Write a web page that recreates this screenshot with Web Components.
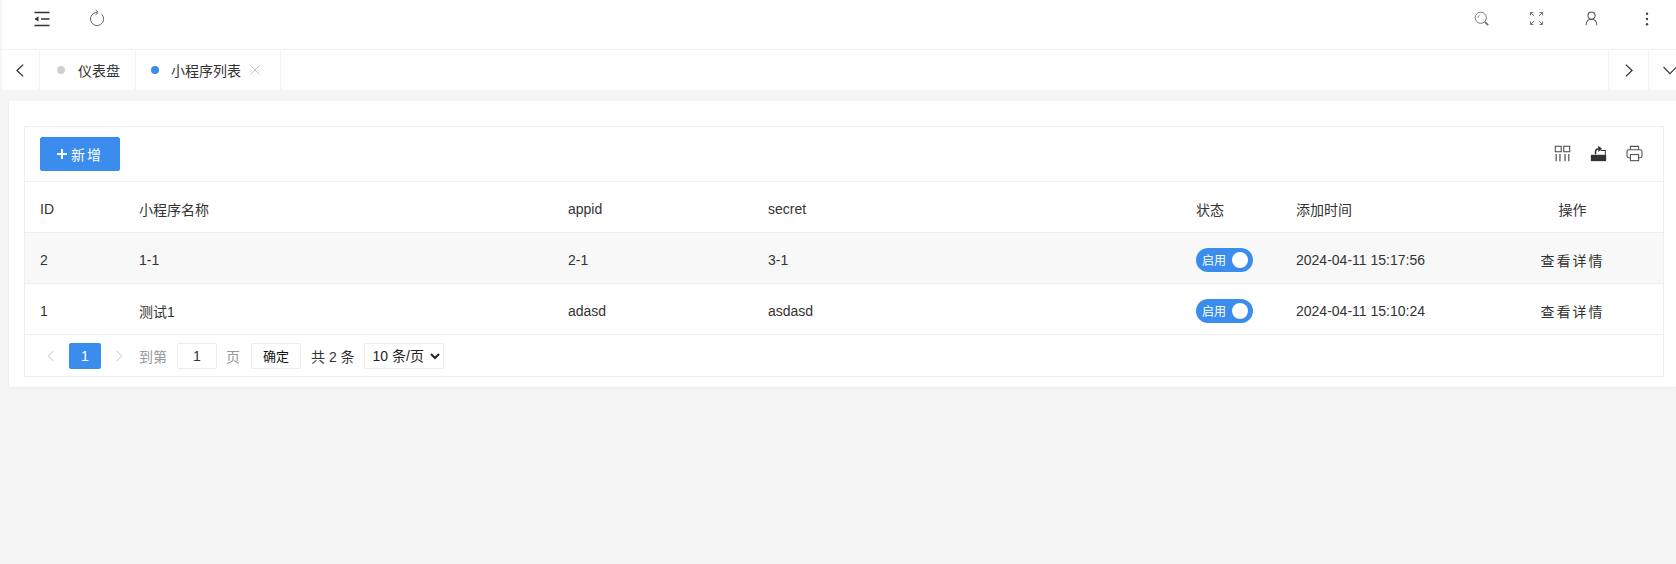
<!DOCTYPE html>
<html lang="zh">
<head>
<meta charset="utf-8">
<title>小程序列表</title>
<style>
  html, body { margin: 0; height: 100%; }
  body {
    background: #f5f5f5;
    font: 14px "Liberation Sans", "Noto Sans CJK SC", sans-serif;
    color: #333;
    overflow: hidden;
  }
</style>
</head>
<body>
<top-bar></top-bar>
<tab-bar>
  <tab-item first>仪表盘</tab-item>
  <tab-item active closable>小程序列表</tab-item>
</tab-bar>
<content-card>
  <data-table></data-table>
</content-card>

<script>
// all icons live here so the components stay short
const ICONS = {
    shrink: '<path d="M2.5 3.5h15M9 10h8.5M2.5 16.5h15" stroke="#333" stroke-width="1.5" fill="none"/><path d="M2.5 10l4-2.8v5.6z" fill="#333"/>',
    refresh: '<path d="M14.7 5.3a6.6 6.6 0 1 1-4.7-1.9" stroke="#666" stroke-width="1" fill="none"/><path d="M8.6 1l2.6 2.4-2.6 2.4" stroke="#666" stroke-width="1" fill="none"/>',
    search: '<circle cx="8.6" cy="8.6" r="6.2" stroke="#777" stroke-width="1.1" fill="none"/><path d="M5.6 8.6a3 3 0 0 1 1.8-2.8" stroke="#777" fill="none"/><path d="M13.2 13.4l3.6 3.4" stroke="#777" stroke-width="2.2" fill="none"/>',
    full: '<path d="M3 3l4 4M3 3v3.4M3 3h3.4M17 3l-4 4M17 3v3.4M17 3h-3.4M3 17l4-4M3 17v-3.4M3 17h3.4M17 17l-4-4M17 17v-3.4M17 17h-3.4" stroke="#666" stroke-width="1.1" fill="none"/>',
    user: '<circle cx="10" cy="6.6" r="4.2" stroke="#555" stroke-width="1.2" fill="none"/><path d="M3.6 18c.2-4.2 2.6-7 6.4-7s6.2 2.8 6.4 7" stroke="#555" stroke-width="1.2" fill="none"/>',
    more: '<circle cx="10" cy="3.4" r="1.5" fill="#444"/><circle cx="10" cy="10" r="1.5" fill="#444"/><circle cx="10" cy="16.6" r="1.5" fill="#444"/>',
    cols: '<path d="M1.5 1.5h7v6.5h-7zM11.5 1.5h7v6.5h-7z" stroke="#444" stroke-width="1.2" fill="none"/><path d="M2.6 10.5v8.5M7 10.5v8.5M13 10.5v8.5M17.4 10.5v8.5" stroke="#666" stroke-width="1.6" fill="none"/>',
    export: '<path d="M1 11.5h18V19H1z" fill="#333"/><path d="M12.5 6.5h5.5v5" stroke="#333" stroke-width="1.2" fill="none"/><path d="M6.5 11V8.2c0-2.4 1.4-3.7 3.6-3.7" stroke="#333" stroke-width="1.8" fill="none"/><path d="M9.6 .8l4.6 3.7-4.6 3.7z" fill="#333"/>',
    print: '<path d="M5.2 5.6V1.6h9.6v4" stroke="#555" stroke-width="1.3" fill="none"/><rect x="1.2" y="5.6" width="17.6" height="9.4" rx="2.2" stroke="#555" stroke-width="1.3" fill="none"/><rect x="5.2" y="11.2" width="9.6" height="7.2" fill="#fff" stroke="#555" stroke-width="1.3"/>'
};

function icon(name, size) {
    return `<svg width="${size}" height="${size}" viewBox="0 0 20 20" aria-hidden="true">${ICONS[name]}</svg>`;
}

class TopBar extends HTMLElement {
    constructor() {
        super();
        this.attachShadow({ mode: 'open' }).innerHTML = `
            <style>
                :host {
                    display: flex;
                    align-items: flex-start;
                    justify-content: space-between;
                    height: 49px;
                    background: #fff;
                    border-bottom: 1px solid #f2f2f2;
                    box-shadow: inset 3px 0 3px -2px rgba(0,0,0,.07);
                }
                .group { display: flex; height: 37px; align-items: center; }
                .left { padding-left: 14px; }
                .right { padding-right: 2px; }
                .cell { width: 55px; display: flex; justify-content: center; align-items: center; }
                svg { display: block; }
            </style>
            <div class="group left">
                <span class="cell">${icon('shrink', 20)}</span>
                <span class="cell">${icon('refresh', 20)}</span>
            </div>
            <div class="group right">
                <span class="cell">${icon('search', 18)}</span>
                <span class="cell">${icon('full', 17)}</span>
                <span class="cell">${icon('user', 17)}</span>
                <span class="cell">${icon('more', 16)}</span>
            </div>`;
    }
}

class TabItem extends HTMLElement {
    constructor() {
        super();
        this.attachShadow({ mode: 'open' }).innerHTML = `
            <style>
                :host {
                    display: flex;
                    align-items: center;
                    padding: 0 15px;
                    border-right: 1px solid #f2f2f2;
                    color: #333;
                }
                :host([first]) { padding-left: 17px; }
                .dot { width: 8px; height: 8px; border-radius: 50%; background: #d0d0d0; margin-right: 13px; }
                :host([active]) .dot { background: #3b8ded; margin-right: 12px; }
                :host([closable]) { padding-right: 20px; }
                .close { display: none; margin-left: 9px; }
                :host([closable]) .close { display: block; }
            </style>
            <span class="dot"></span>
            <slot></slot>
            <svg class="close" width="10" height="10" viewBox="0 0 10 10"><path d="M.5.5l9 9M9.5.5l-9 9" stroke="#c4c4c4"/></svg>`;
    }
}

class TabBar extends HTMLElement {
    constructor() {
        super();
        this.attachShadow({ mode: 'open' }).innerHTML = `
            <style>
                :host {
                    display: flex;
                    height: 40px;
                    background: #fff;
                    box-shadow: inset 3px 0 3px -2px rgba(0,0,0,.07);
                }
                .arrow {
                    width: 39px;
                    flex: none;
                    display: flex;
                    align-items: center;
                    justify-content: center;
                    border-right: 1px solid #f2f2f2;
                }
                .tabs { flex: 1; display: flex; }
                .end { border-right: 0; border-left: 1px solid #f2f2f2; }
                .down { width: 28px; overflow: hidden; justify-content: flex-start; padding-left: 14px; box-sizing: border-box; }
                svg { display: block; flex: none; }
                path { stroke: #333; fill: none; }
            </style>
            <div class="arrow"><svg width="8" height="13" viewBox="0 0 8 13"><path d="M7.2.6L1 6.5l6.2 5.9" stroke-width="1.3"/></svg></div>
            <div class="tabs"><slot></slot></div>
            <div class="arrow end"><svg width="8" height="13" viewBox="0 0 8 13"><path d="M.8.6L7 6.5.8 12.4" stroke-width="1.3"/></svg></div>
            <div class="arrow end down"><svg width="16" height="9" viewBox="0 0 16 9"><path d="M.5 1L7 7.6 13.5 1" stroke-width="1.1"/></svg></div>`;
    }
}

class ContentCard extends HTMLElement {
    constructor() {
        super();
        this.attachShadow({ mode: 'open' }).innerHTML = `
            <style>
                :host {
                    display: block;
                    margin: 11px 0 0 9px;
                    padding: 25px 12px 10px 15px;
                    background: #fff;
                    box-shadow: 0 1px 2px rgba(0,0,0,.05);
                }
            </style>
            <slot></slot>`;
    }
}

class StatusSwitch extends HTMLElement {
    constructor() {
        super();
        this.attachShadow({ mode: 'open' }).innerHTML = `
            <style>
                :host {
                    display: inline-flex;
                    align-items: center;
                    justify-content: space-between;
                    box-sizing: border-box;
                    width: 57px;
                    height: 24px;
                    padding: 0 5px 0 6px;
                    border-radius: 12px;
                    background: #3b8ded;
                    color: #fff;
                    font-size: 12px;
                    vertical-align: top;
                }
                i { width: 16px; height: 16px; border-radius: 50%; background: #fff; }
            </style>
            <slot></slot><i></i>`;
    }
}

class DataTable extends HTMLElement {
    constructor() {
        super();
        this.rows = [
            { id: 2, name: '1-1', appid: '2-1', secret: '3-1', time: '2024-04-11 15:17:56', hover: true },
            { id: 1, name: '测试1', appid: 'adasd', secret: 'asdasd', time: '2024-04-11 15:10:24' }
        ];
        this.attachShadow({ mode: 'open' });
    }

    connectedCallback() {
        this.render();
    }

    render() {
        const rowHtml = this.rows.map(r => `
            <div class="row${r.hover ? ' hover' : ''}">
                <div>${r.id}</div><div>${r.name}</div><div>${r.appid}</div><div>${r.secret}</div>
                <div><status-switch>启用</status-switch></div>
                <div>${r.time}</div><div class="center link">查看详情</div>
            </div>`).join('');

        this.shadowRoot.innerHTML = `
            <style>
                :host {
                    display: block;
                    border: 1px solid #eee;
                    color: #333;
                }
                .toolbar {
                    display: flex;
                    align-items: center;
                    justify-content: space-between;
                    height: 54px;
                    padding: 0 20px 0 15px;
                    border-bottom: 1px solid #eee;
                }
                .add {
                    display: flex;
                    align-items: center;
                    justify-content: center;
                    gap: 4px;
                    width: 80px;
                    height: 34px;
                    border: 1px solid #3b8ded;
                    border-radius: 2px;
                    background: #3b8ded;
                    color: #fff;
                    font: inherit;
                    letter-spacing: 2px;
                    padding: 0;
                }
                .tools { display: flex; gap: 19px; margin-bottom: 2px; }
                svg { display: block; }
                .row {
                    display: grid;
                    grid-template-columns: 99px 429px 200px 428px 100px 199px 1fr;
                    align-items: center;
                    box-sizing: content-box;
                    height: 47px;
                    padding-top: 3px;
                    border-bottom: 1px solid #eee;
                }
                .row > div { padding: 0 15px; }
                .row > .center { padding: 0 14px 0 16px; text-align: center; }
                .hover { background: #f8f8f8; }
                .link { letter-spacing: 2px; }
                .pager {
                    display: flex;
                    align-items: center;
                    height: 41px;
                    padding-left: 18px;
                    font-size: 14px;
                }
                .pg-arrow { width: 15px; display: flex; justify-content: center; }
                .num {
                    width: 32px; height: 26px; margin: 0 10px 0 11px;
                    background: #3b8ded; color: #fff; border-radius: 2px;
                    display: flex; align-items: center; justify-content: center;
                }
                .muted { color: #999; }
                .box {
                    height: 26px; box-sizing: border-box;
                    border: 1px solid #eee; border-radius: 2px;
                    display: flex; align-items: center; justify-content: center;
                    font-size: 13px;
                }
                .jump { width: 40px; margin: 0 9px 0 10px; color: #333; font-size: 14px; }
                .ok { width: 50px; margin: 0 10px 0 11px; color: #111; }
                select {
                    width: 80px; height: 26px; margin-left: 9px;
                    border: 1px solid #eee; border-radius: 2px; background: #fff;
                    font: inherit; color: #222; padding: 0 0 0 4px;
                }
            </style>
            <div class="toolbar">
                <button class="add"><svg width="10" height="10" viewBox="0 0 10 10"><path d="M5 0v10M0 5h10" stroke="#fff" stroke-width="2"/></svg>新增</button>
                <div class="tools">${icon('cols', 17)}${icon('export', 17)}${icon('print', 17)}</div>
            </div>
            <div class="row">
                <div>ID</div><div>小程序名称</div><div>appid</div><div>secret</div>
                <div>状态</div><div>添加时间</div><div class="center">操作</div>
            </div>
            ${rowHtml}
            <div class="pager">
                <span class="pg-arrow"><svg width="14" height="14" viewBox="0 0 20 20"><path d="M13 3l-7 7 7 7" stroke="#d2d2d2" stroke-width="1.5" fill="none"/></svg></span>
                <span class="num">1</span>
                <span class="pg-arrow"><svg width="14" height="14" viewBox="0 0 20 20"><path d="M7 3l7 7-7 7" stroke="#d2d2d2" stroke-width="1.5" fill="none"/></svg></span>
                <span class="muted" style="margin-left:13px">到第</span>
                <span class="box jump">1</span>
                <span class="muted">页</span>
                <span class="box ok">确定</span>
                <span>共 2 条</span>
                <select><option>10 条/页</option></select>
            </div>`;
    }
}

customElements.define('top-bar', TopBar);
customElements.define('tab-item', TabItem);
customElements.define('tab-bar', TabBar);
customElements.define('content-card', ContentCard);
customElements.define('status-switch', StatusSwitch);
customElements.define('data-table', DataTable);
</script>
</body>
</html>
